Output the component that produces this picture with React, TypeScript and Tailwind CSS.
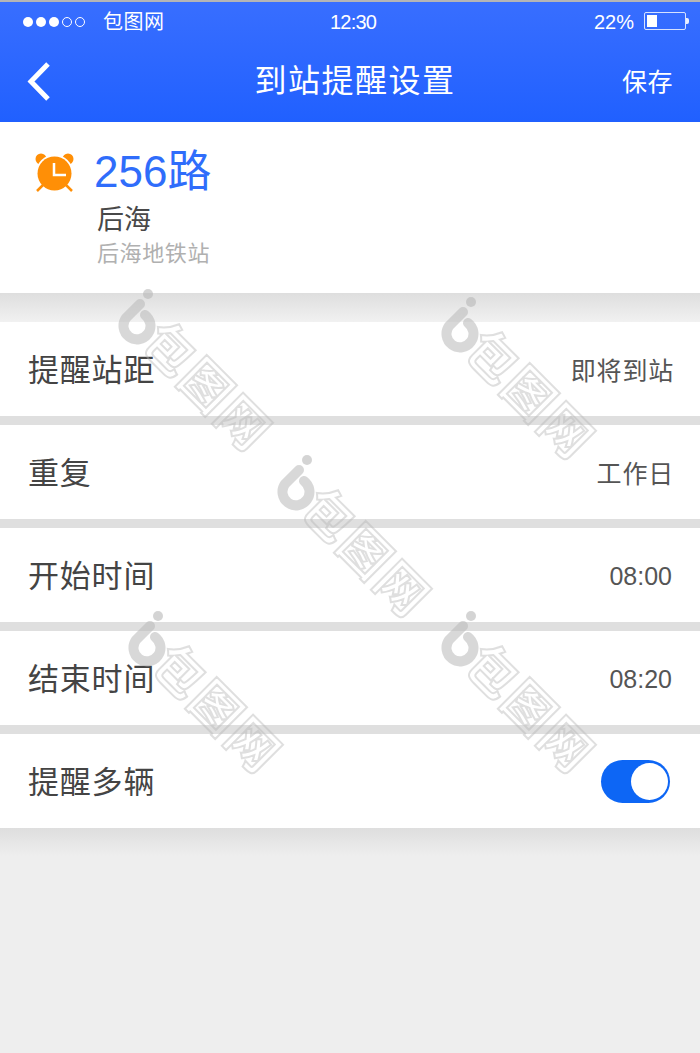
const cjk = "font-['Noto_Sans_CJK_SC',sans-serif]";
const latin = "font-['Liberation_Sans','Noto_Sans_CJK_SC',sans-serif]";

function Mark({ x, y }: { x: number; y: number }) {
  return (
    <div className="absolute w-[170px] h-[170px] pointer-events-none" style={{ left: x, top: y }}>
      <svg width="40" height="56" viewBox="0 0 40 56" className="absolute left-0 top-0">
        <circle cx="30" cy="5" r="5" fill="#b8b8b8" fillOpacity="0.6" />
        <path d="M22 15 L8 29 A13.5 13.5 0 1 0 27 26" fill="none" stroke="#b8b8b8" strokeOpacity="0.55" strokeWidth="10" strokeLinecap="round" />
      </svg>
      <div className={`absolute left-[56px] top-[20px] w-[170px] flex origin-top-left rotate-45 text-[50px] leading-[56px] font-bold tracking-[2px] text-transparent [-webkit-text-stroke:2px_rgba(185,185,185,0.45)] ${cjk}`}>
        包图网
      </div>
    </div>
  );
}

function Row({ label, value, num, children }: { label: string; value?: string; num?: boolean; children?: React.ReactNode }) {
  return (
    <div className="h-[94px] bg-white flex items-center justify-between pl-[28px] pr-[28px]">
      <span className="text-[31px] leading-none text-[#444] tracking-[0.8px] -mt-[4px]">{label}</span>
      {value ? (
        <span className={`text-[25px] leading-none text-[#555] ${num ? `${latin} mt-[3px]` : "tracking-[0.8px] -mr-[2px]"}`}>{value}</span>
      ) : (
        children
      )}
    </div>
  );
}

function Gap() {
  return <div className="h-[9px] bg-[#dfdfdf]" />;
}

export default function App() {
  return (
    <div className={`relative w-[700px] h-[1053px] overflow-hidden bg-[#eeeeee] ${cjk}`}>
      <div className="h-[2px] bg-[#b5b5b5]" />
      <header className="h-[120px] bg-gradient-to-b from-[#386eff] to-[#2060ff] text-white flex flex-col">
        <div className="relative h-[40px] flex items-center justify-between pl-[23px] pr-[11px]">
          <div className="flex items-center">
            <div className="flex gap-[3px] items-center">
              <span className="w-[10px] h-[10px] rounded-full bg-white" />
              <span className="w-[10px] h-[10px] rounded-full bg-white" />
              <span className="w-[10px] h-[10px] rounded-full bg-white" />
              <span className="w-[10px] h-[10px] rounded-full border border-white" />
              <span className="w-[10px] h-[10px] rounded-full border border-white" />
            </div>
            <span className="ml-[18px] text-[20px] leading-none tracking-[0.5px] -mt-[2px]">包图网</span>
          </div>
          <span className={`absolute left-[330px] top-[10px] text-[20px] leading-none tracking-[-0.8px] ${latin}`}>12:30</span>
          <div className="flex items-center">
            <span className={`text-[20px] leading-none ${latin}`}>22%</span>
            <div className="ml-[10px] -mt-[2px] w-[42px] h-[18px] rounded-[2px] border border-white/80 p-[2px]">
              <div className="w-[10px] h-full bg-white" />
            </div>
            <div className="w-[3px] h-[6px] -mt-[2px] bg-white/90 rounded-r-[2px]" />
          </div>
        </div>
        <div className="relative h-[80px] flex items-center justify-center">
          <svg width="26" height="42" viewBox="0 0 26 42" className="absolute left-[26px] top-[19px]">
            <path d="M22 3 L5 20.5 L22 38" fill="none" stroke="#fff" strokeWidth="5" />
          </svg>
          <h1 className="text-[32px] leading-none tracking-[1.5px] font-normal -mt-[8px] ml-[10px]">到站提醒设置</h1>
          <span className="absolute right-[27px] top-[26px] text-[25px] leading-none tracking-[0.5px]">保存</span>
        </div>
      </header>

      <section className="h-[171px] bg-white flex pl-[33px]">
        <svg width="43" height="40" viewBox="0 0 43 40" className="mt-[30px] shrink-0">
          <circle cx="8" cy="7" r="5.5" fill="#ff8f06" />
          <circle cx="35" cy="7" r="5.5" fill="#ff8f06" />
          <circle cx="21.5" cy="21" r="18.5" fill="#fff" />
          <circle cx="21.5" cy="21.5" r="17" fill="#ff8f06" />
          <path d="M10 33 L4 39 M33 33 L39 39" stroke="#ff8f06" strokeWidth="2.5" />
          <path d="M21 11 V23 H33" fill="none" stroke="#fff" strokeWidth="2.5" />
        </svg>
        <div className="ml-[18px] flex flex-col">
          <div className={`mt-[25px] text-[44px] leading-[50px] text-[#2f6dfb] ${latin}`}>256路</div>
          <div className="mt-[5px] ml-[3px] text-[27px] leading-[32px] text-[#484848]">后海</div>
          <div className="mt-[3px] ml-[3px] text-[22px] leading-[28px] text-[#b0b0b0] tracking-[0.6px]">后海地铁站</div>
        </div>
      </section>

      <div className="h-[29px] bg-gradient-to-b from-[#dedede] to-[#f1f1f1]" />
      <Row label="提醒站距" value="即将到站" />
      <Gap />
      <Row label="重复" value="工作日" />
      <Gap />
      <Row label="开始时间" value="08:00" num />
      <Gap />
      <Row label="结束时间" value="08:20" num />
      <Gap />
      <Row label="提醒多辆">
        <div className="w-[69px] h-[43px] rounded-full bg-[#0d66f5] flex items-center justify-end pr-[2px] mr-[2px]">
          <div className="w-[37px] h-[37px] rounded-full bg-white" />
        </div>
      </Row>
      <div className="h-[28px] bg-gradient-to-b from-[#dedede] to-[#eeeeee]" />

      <Mark x={118} y={289} />
      <Mark x={441} y={297} />
      <Mark x={277} y={455} />
      <Mark x={128} y={611} />
      <Mark x={441} y={611} />
    </div>
  );
}
